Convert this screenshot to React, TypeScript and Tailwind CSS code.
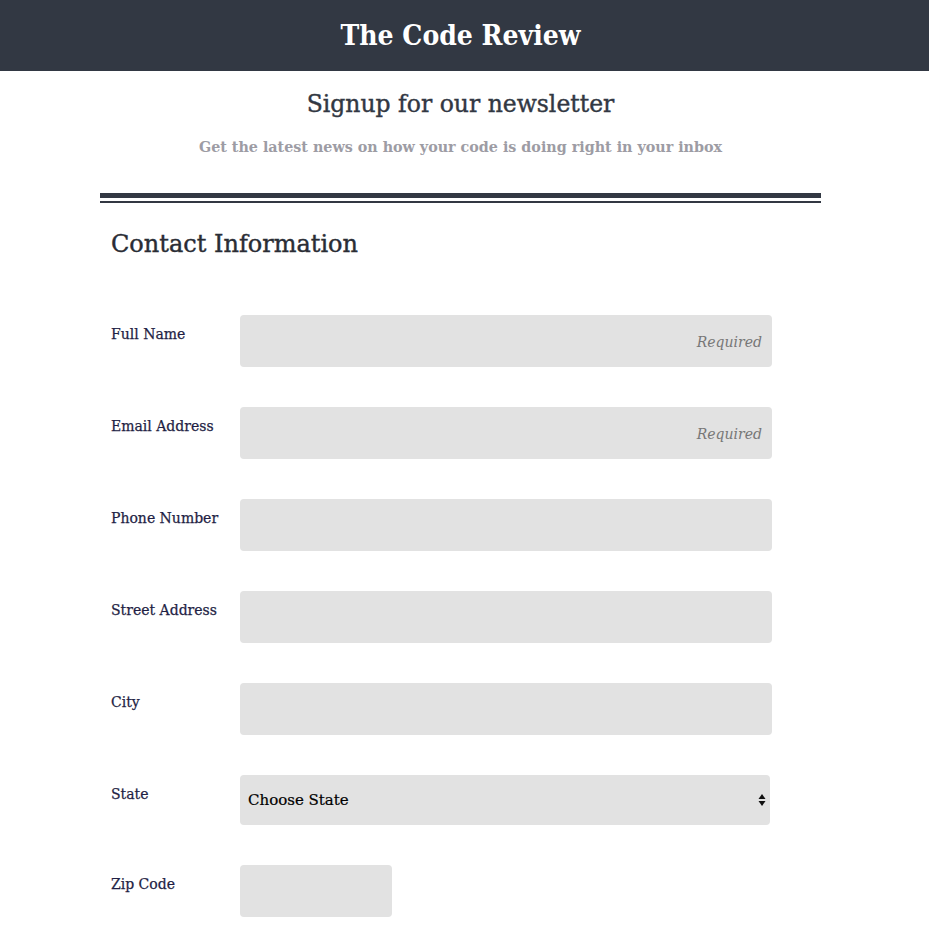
import React from 'react';

const fields = [
  { label: 'Full Name', required: true },
  { label: 'Email Address', required: true },
  { label: 'Phone Number', required: false },
  { label: 'Street Address', required: false },
  { label: 'City', required: false },
];

export default function App() {
  const serif = "font-['DejaVu_Serif',serif]";
  const labelClass = `w-[140px] shrink-0 pl-[11px] pt-[9px] text-[14px] leading-[20px] text-[#1f1f45] [-webkit-text-stroke:0.25px_currentColor] ${serif}`;

  return (
    <div className={`min-h-screen bg-white ${serif}`}>
      <header className="h-[71px] bg-[#323843]">
        <div className="w-[921px] h-full flex items-center justify-center">
          <h1 className="font-['DejaVu_Serif_Condensed','DejaVu_Serif',serif] text-[28px] font-bold text-white leading-none">The Code Review</h1>
        </div>
      </header>

      <div className="w-[921px] flex flex-col items-center">
        <h2 className="mt-[15px] text-[23.5px] leading-[36px] text-[#323843] [-webkit-text-stroke:0.4px_currentColor]">Signup for our newsletter</h2>
        <p className="mt-[13px] text-[14.3px] leading-[24px] font-bold text-[#9d9ca4]">
          Get the latest news on how your code is doing right in your inbox
        </p>

        <div className="w-[721px] mt-[34px]">
          <div className="h-[5px] bg-[#323843]" />
          <div className="h-[2px] mt-[3px] bg-[#323843]" />

          <h3 className="mt-[25px] pl-[11px] text-[24px] leading-[32px] text-[#2a2d35] [-webkit-text-stroke:0.4px_currentColor]">Contact Information</h3>

          <form className="mt-[55px] flex flex-col gap-[40px]">
            {fields.map((f) => (
              <div key={f.label} className="flex">
                <label className={labelClass}>{f.label}</label>
                <input
                  type="text"
                  placeholder={f.required ? 'Required' : ''}
                  className={`w-[532px] h-[52px] rounded-[4px] bg-[#e2e2e2] px-[10px] pt-[2px] text-right text-[14px] italic placeholder:text-[#777777] outline-none ${serif}`}
                />
              </div>
            ))}

            <div className="flex">
              <label className={labelClass}>State</label>
              <div className="relative w-[530px] h-[50px]">
                <select className={`w-full h-full appearance-none rounded-[4px] bg-[#e2e2e2] pl-[8px] text-[15px] text-black outline-none [-webkit-text-stroke:0.2px_currentColor] ${serif}`}>
                  <option>Choose State</option>
                </select>
                <svg className="absolute right-[4px] top-[18px] pointer-events-none" width="8" height="14" viewBox="0 0 8 14">
                  <path d="M4 1 L7.5 6 L0.5 6 Z" fill="#111" />
                  <path d="M4 13 L7.5 8 L0.5 8 Z" fill="#111" />
                </svg>
              </div>
            </div>

            <div className="flex pb-[12px]">
              <label className={labelClass}>Zip Code</label>
              <input type="text" className="w-[152px] h-[52px] rounded-[4px] bg-[#e2e2e2] px-[10px] outline-none" />
            </div>
          </form>
        </div>
      </div>
    </div>
  );
}
